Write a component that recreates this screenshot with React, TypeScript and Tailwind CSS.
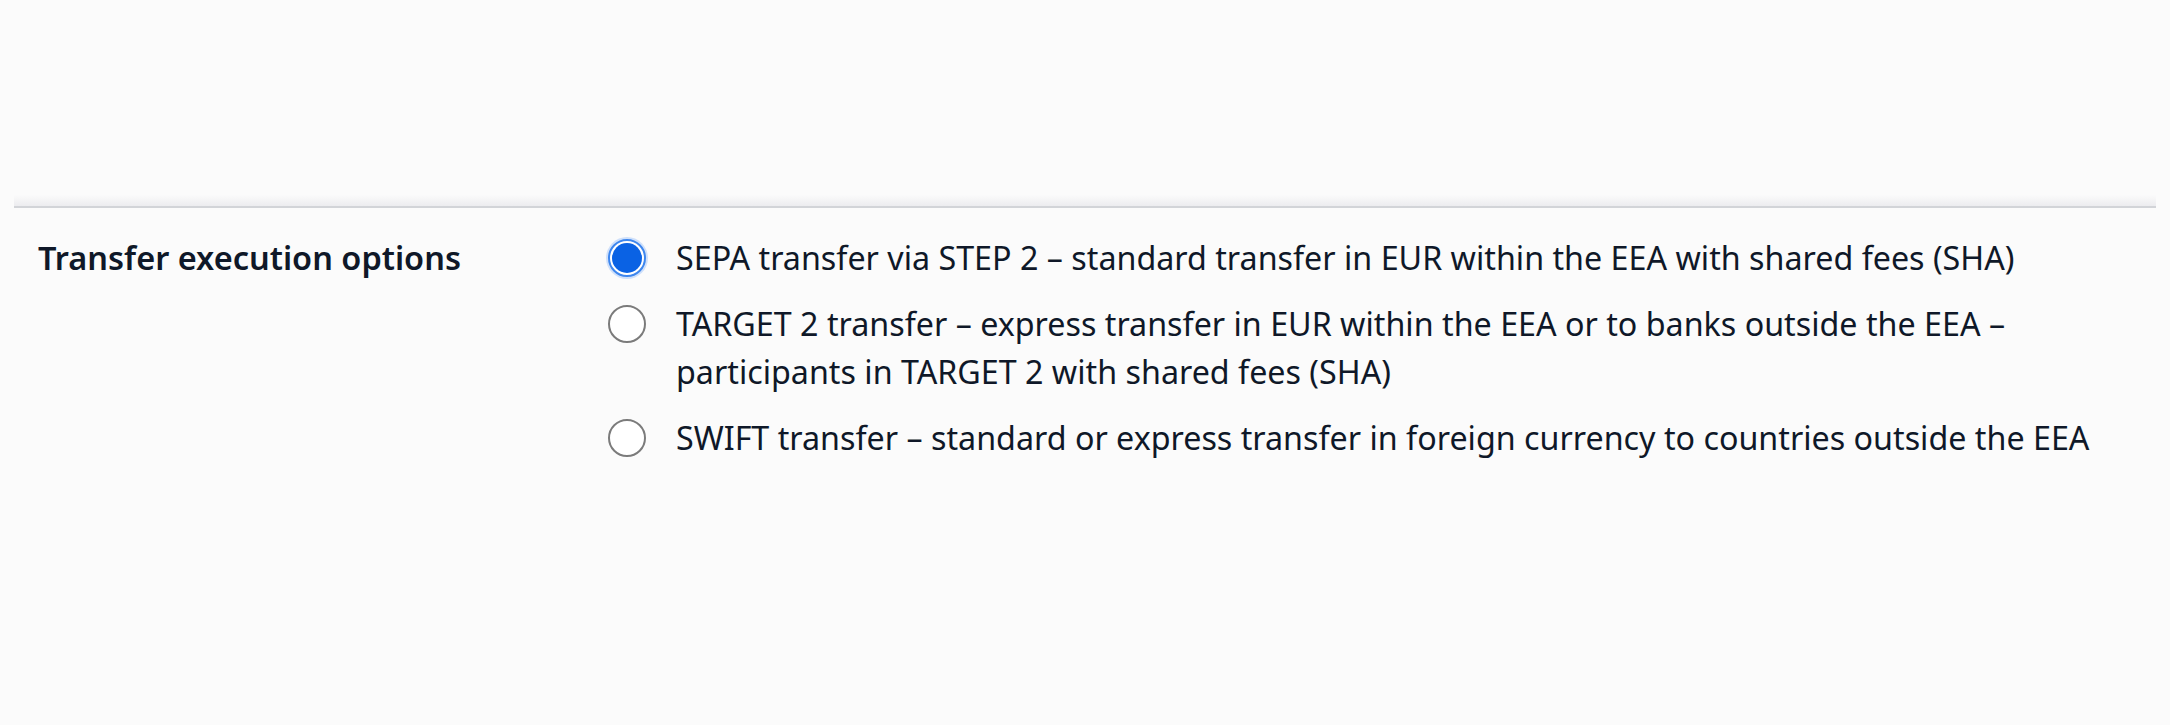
import React, { useState } from 'react';

type Option = { id: string; label: string };

const options: Option[] = [
  { id: 'sepa', label: 'SEPA transfer via STEP 2 – standard transfer in EUR within the EEA with shared fees (SHA)' },
  {
    id: 'target2',
    label: 'TARGET 2 transfer – express transfer in EUR within the EEA or to banks outside the EEA – participants in TARGET 2 with shared fees (SHA)',
  },
  { id: 'swift', label: 'SWIFT transfer – standard or express transfer in foreign currency to countries outside the EEA' },
];

const RadioDot: React.FC<{ checked: boolean }> = ({ checked }) =>
  checked ? (
    <span className="mt-[5px] flex h-[38px] w-[38px] shrink-0 items-center justify-center rounded-full border-2 border-[#3d86ee] bg-white shadow-[0_0_0_2px_#cfe0fa]">
      <span className="h-[30px] w-[30px] rounded-full bg-[#0a62e4]" />
    </span>
  ) : (
    <span className="mt-[5px] h-[38px] w-[38px] shrink-0 rounded-full border-2 border-[#7b7b7b] bg-white" />
  );

export default function App() {
  const [selected, setSelected] = useState('sepa');

  return (
    <div className="h-[725px] w-full bg-[#fbfbfb] font-['Noto_Sans','Liberation_Sans',sans-serif] text-[#0f1828]">
      <div className="h-[195px]" />
      <div className="mx-[14px]">
        <div className="h-[11px] bg-gradient-to-b from-[#fbfbfb] to-[#ececef]" />
        <div className="h-[2px] bg-[#d2d4d8]" />
      </div>

      <section className="flex pl-[38px] pt-[26px]">
        <h2 className="w-[570px] shrink-0 text-[32.5px] leading-[48px] font-semibold">Transfer execution options</h2>

        <div className="flex flex-col gap-[17px]">
          {options.map((opt) => (
            <label
              key={opt.id}
              className="flex cursor-pointer items-start gap-[30px]"
              onClick={() => setSelected(opt.id)}
            >
              <RadioDot checked={selected === opt.id} />
              <span className="max-w-[1460px] text-[32.25px] leading-[48.5px]">{opt.label}</span>
            </label>
          ))}
        </div>
      </section>
    </div>
  );
}
